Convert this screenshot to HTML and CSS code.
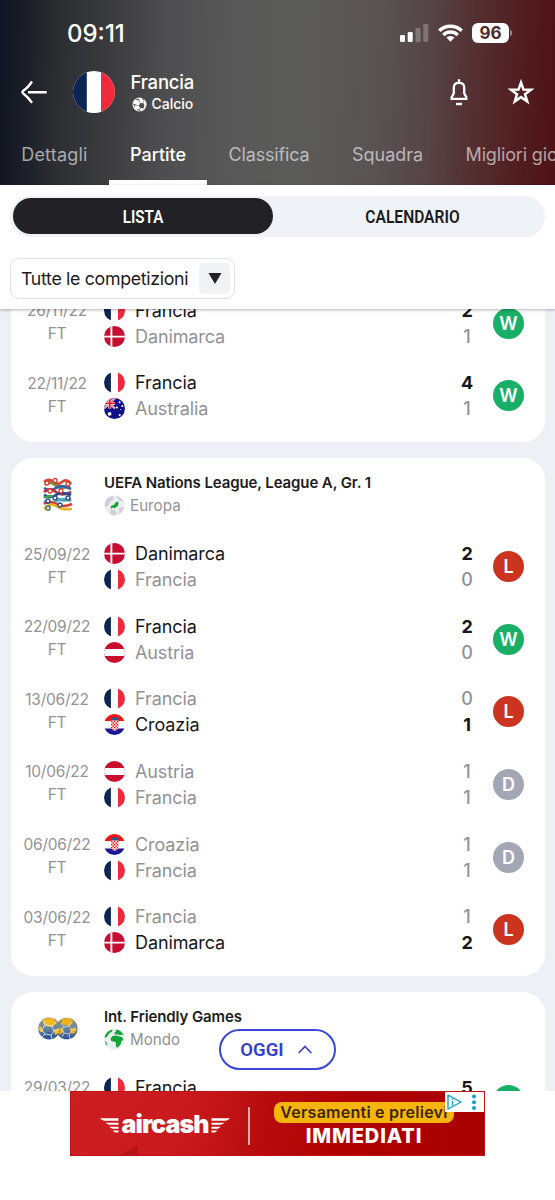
FILE: index.html
```html
<!DOCTYPE html>
<html lang="it">
<head>
<meta charset="utf-8">
<title>Francia – Partite</title>
<link rel="stylesheet" href="styles.css">
</head>
<body>
<svg class="defs" width="0" height="0" aria-hidden="true">
  <symbol id="fr" viewBox="0 0 21 21"><rect width="21" height="21" fill="#fff"/><rect width="6.9" height="21" fill="#0b2554"/><rect x="14" width="7" height="21" fill="#ef2b3b"/></symbol>
  <symbol id="dk" viewBox="0 0 21 21"><rect width="21" height="21" fill="#c60f30"/><path d="M7.4 0v21M0 10.6h21" stroke="#fff" stroke-width="1.9"/></symbol>
  <symbol id="at" viewBox="0 0 21 21"><rect width="21" height="21" fill="#c8102e"/><rect y="7" width="21" height="7" fill="#fff"/></symbol>
  <symbol id="hr" viewBox="0 0 21 21"><rect width="21" height="21" fill="#fff"/><rect width="21" height="7" fill="#f5160c"/><rect y="14.5" width="21" height="7" fill="#171796"/><path d="M6.500 2.700l1.700 1 1.600-1 .9.6.9-.6 1.600 1 1.700-1-.8 4.300H7.300z" fill="#35558f"/><path d="M7 6.500h7.400v6q0 3.600-3.700 4.200Q7 16 7 12.500z" fill="#fff"/><path d="M7 7.500h7.400M7 10.500h7.400M7 13.500h7M8.500 15.500h4.500" stroke="#f5160c" stroke-width="1.500" stroke-dasharray="1.500 1.450"/><path d="M8.500 9h6M8.500 12h6" stroke="#f5160c" stroke-width="1.500" stroke-dasharray="1.500 1.450"/></symbol>
  <symbol id="au" viewBox="0 0 21 21"><rect width="21" height="21" fill="#10108c"/><path d="M0 0l11 10.500M11 0L0 10.500" stroke="#fff" stroke-width="2"/><path d="M0 0l11 10.500M11 0L0 10.500" stroke="#f01828" stroke-width=".8"/><path d="M5.800 0v10.500M0 5.400h11" stroke="#fff" stroke-width="3"/><path d="M5.800 0v10.500M0 5.400h11" stroke="#f01828" stroke-width="1.800"/><g fill="#fff"><circle cx="5.600" cy="15.800" r="1.900"/><circle cx="15.600" cy="4.300" r="1"/><circle cx="12.900" cy="9.500" r="1"/><circle cx="18.300" cy="8" r="1"/><circle cx="16.700" cy="11.500" r=".6"/><circle cx="15.700" cy="17" r="1.100"/></g></symbol>
</svg>

<header class="top">
  <div class="status">
    <span class="clock">09:11</span>
    <div class="status-icons">
      <svg width="29" height="19" viewBox="0 0 29 19"><g fill="#fff"><rect x="0" y="11" width="5" height="7" rx="1.300"/><rect x="7.700" y="8" width="5" height="10" rx="1.300"/><g opacity=".25"><rect x="15.500" y="4" width="5" height="14" rx="1.300"/><rect x="23.300" y="0" width="5" height="18" rx="1.300"/></g></g></svg>
      <svg width="25" height="18" viewBox="0 0 25 18" fill="none" stroke="#fff" stroke-width="3.500"><path d="M1.300 6.700a16 16 0 0 1 22.400 0M5.300 10.900a10.300 10.300 0 0 1 14.400 0"/><path d="M12.500 17.700l-4.100-4.100a5.900 5.900 0 0 1 8.200 0z" fill="#fff" stroke="none"/></svg>
      <span class="battery"><span class="level">96</span><span class="nub"></span></span>
    </div>
  </div>
  <div class="team">
    <svg class="back" width="28" height="26" viewBox="0 0 28 26" fill="none" stroke="#fff" stroke-width="2.400"><path d="M9 13.200h18.700M13 2.500C10 7 8.500 9.200 4.500 11.500Q2.300 13 4.500 14.700C8.500 17.500 10 19.500 13 23.700"/></svg>
    <svg class="crest"><use href="#fr"/></svg>
    <div class="team-text">
      <div class="team-name">Francia</div>
      <div class="sport"><svg width="15" height="15" viewBox="0 0 15 15"><circle cx="7.500" cy="7.500" r="7" fill="#fff"/><path d="M8 6.300l3.200-.3 1.300 2.500-1.200 2.700-3 .1L6.800 9z" fill="#4b4b4b"/><path d="M3.500 2.800l2.500-.6 1.500 1.500M1 7l2 .6-.8 2.500M5 12.500l2.500.4.8 1.600M10.500 1.200l1.500 2" fill="none" stroke="#666" stroke-width="1.100"/><path d="M8 6.300L7 3.700M6.800 9L3 7.600M8.300 11.300L7.500 13M11.200 6l1-2.500M11.300 11.200l1 1" stroke="#777" stroke-width=".7"/></svg><span>Calcio</span></div>
    </div>
    <svg class="bell" width="20" height="28" viewBox="0 0 20 28" fill="none" stroke="#fff" stroke-width="2.300"><path d="M10 1.200v3.500"/><path d="M4.800 14.500V9.500Q4.800 4.900 10 4.900t5.200 4.600v5q0 1.200.8 2.400l1.300 2.100v1.800H2.700V19L4 16.900q.8-1.200.8-2.400z"/><path d="M7 26h6" stroke-width="2.400"/></svg>
    <svg class="star" width="26" height="26" viewBox="0 0 26 26" fill="none" stroke="#fff" stroke-width="2.500"><path d="M13 3.600l2.500 7 7.500.1-6 4.500 2.200 7.200-6.200-4.300-6.200 4.300L9 15.200l-6-4.500 7.500-.1z"/></svg>
  </div>
  <nav class="tabs">
    <a class="tab tab-first">Dettagli</a>
    <a class="tab tab-on">Partite</a>
    <a class="tab tab-tight">Classifica</a>
    <a class="tab">Squadra</a>
    <a class="tab tab-tight">Migliori giocatori</a>
  </nav>
</header>

<section class="controls">
  <div class="segment"><div class="seg seg-on"><span>LISTA</span></div><div class="seg seg-off"><span>CALENDARIO</span></div></div>
  <div class="picker"><span>Tutte le competizioni</span><div class="picker-btn"><svg width="14" height="11" viewBox="0 0 14 11"><path d="M.5 0h13L7 11z" fill="#222226"/></svg></div></div>
</section>

<main class="feed">
  <div class="feed-inner">
    <article class="card card-cut">
      <div class="match"><div class="when"><span>26/11/22</span><span>FT</span></div>
        <div class="sides"><div class="side win"><svg class="flag"><use href="#fr"/></svg><span>Francia</span><b>2</b></div><div class="side"><svg class="flag"><use href="#dk"/></svg><span>Danimarca</span><b>1</b></div></div><i class="res w">W</i></div>
      <div class="match"><div class="when"><span>22/11/22</span><span>FT</span></div>
        <div class="sides"><div class="side win"><svg class="flag"><use href="#fr"/></svg><span>Francia</span><b>4</b></div><div class="side"><svg class="flag"><use href="#au"/></svg><span>Australia</span><b>1</b></div></div><i class="res w">W</i></div>
    </article>

    <article class="card">
      <div class="comp">
        <div class="comp-logo"><svg width="32" height="35" viewBox="0 0 32 35" fill="none"><g stroke-width="2.700"><path d="M2 5q5-4 9 0t9 0 9 2" stroke="#d6452f"/><path d="M3 8q5-5 10 0t15 1" stroke="#7b8d42"/><path d="M2 11q6 4 12 0t15 1" stroke="#3163aa"/><path d="M2 15q6-5 12 0t15 0" stroke="#b92d49"/><path d="M2 18q7 4 12 0t15 0" stroke="#274c96"/><path d="M2 21q6-4 12 0t15 1" stroke="#43a054"/><path d="M2 24q7 4 13 0t14 0" stroke="#56a5d4"/><path d="M2 27q5-4 12 0t16 0" stroke="#d43c2f"/><path d="M2 32q7-7 12-3t16 3" stroke="#e6b325"/></g><g stroke="#d43c2f" stroke-width="1.300" fill="#fff"><circle cx="5" cy="6" r="2"/><circle cx="13" cy="3.500" r="2"/><circle cx="26" cy="7" r="2"/><circle cx="8" cy="14" r="2"/><circle cx="19" cy="14" r="2"/></g><g stroke="#2a4b8b" stroke-width="1.300" fill="#eee"><circle cx="13" cy="21" r="2"/><circle cx="26" cy="21" r="2"/><circle cx="6" cy="24" r="2"/><circle cx="18" cy="28" r="2"/></g><circle cx="6" cy="31" r="2.200" stroke="#3c7447" stroke-width="1.300" fill="#ece"/></svg></div>
        <div class="comp-text"><div class="comp-name">UEFA Nations League, League A, Gr. 1</div><div class="comp-area"><svg width="21" height="21" viewBox="0 0 21 21"><circle cx="10.500" cy="10.500" r="10.200" fill="#eceef2"/><path d="M1 7q3-6 8-6l1 3-4 3-2 4-3 1zM12 1q5 1 7.500 5.500L16 6l-2-2zM6 14l5 1 2 4-3 1.700-3-1zM15 13l5-1q-1 5-5 7z" fill="#cdd1d7"/><path d="M6.500 13l1-2.500 2.500-.5 1.500-2.500 3-1-.3 3-.2 1.500-2 1-1.500 1.500-1.500-1-1.500 1z" fill="#12a332"/></svg><span>Europa</span></div></div>
      </div>
      <div class="match"><div class="when"><span>25/09/22</span><span>FT</span></div>
        <div class="sides"><div class="side win"><svg class="flag"><use href="#dk"/></svg><span>Danimarca</span><b>2</b></div><div class="side"><svg class="flag"><use href="#fr"/></svg><span>Francia</span><b>0</b></div></div><i class="res l">L</i></div>
      <div class="match"><div class="when"><span>22/09/22</span><span>FT</span></div>
        <div class="sides"><div class="side win"><svg class="flag"><use href="#fr"/></svg><span>Francia</span><b>2</b></div><div class="side"><svg class="flag"><use href="#at"/></svg><span>Austria</span><b>0</b></div></div><i class="res w">W</i></div>
      <div class="match"><div class="when"><span>13/06/22</span><span>FT</span></div>
        <div class="sides"><div class="side"><svg class="flag"><use href="#fr"/></svg><span>Francia</span><b>0</b></div><div class="side win"><svg class="flag"><use href="#hr"/></svg><span>Croazia</span><b>1</b></div></div><i class="res l">L</i></div>
      <div class="match"><div class="when"><span>10/06/22</span><span>FT</span></div>
        <div class="sides"><div class="side"><svg class="flag"><use href="#at"/></svg><span>Austria</span><b>1</b></div><div class="side"><svg class="flag"><use href="#fr"/></svg><span>Francia</span><b>1</b></div></div><i class="res d">D</i></div>
      <div class="match"><div class="when"><span>06/06/22</span><span>FT</span></div>
        <div class="sides"><div class="side"><svg class="flag"><use href="#hr"/></svg><span>Croazia</span><b>1</b></div><div class="side"><svg class="flag"><use href="#fr"/></svg><span>Francia</span><b>1</b></div></div><i class="res d">D</i></div>
      <div class="match"><div class="when"><span>03/06/22</span><span>FT</span></div>
        <div class="sides"><div class="side"><svg class="flag"><use href="#fr"/></svg><span>Francia</span><b>1</b></div><div class="side win"><svg class="flag"><use href="#dk"/></svg><span>Danimarca</span><b>2</b></div></div><i class="res l">L</i></div>
    </article>

    <article class="card">
      <div class="comp">
        <div class="comp-logo"><svg width="40" height="23" viewBox="0 0 40 23"><defs><linearGradient id="ball" x1="0" y1="0" x2="0" y2="1"><stop offset="0" stop-color="#a9975a"/><stop offset=".45" stop-color="#6f86a0"/><stop offset="1" stop-color="#28528f"/></linearGradient></defs><circle cx="28.800" cy="11.500" r="10.800" fill="url(#ball)"/><path d="M24 2l8-1 3 4-4 4-7-2zM32 12l6-2-1 6-4 1zM19 12l4-2 3 4-4 4z" fill="#eeb31d"/><path d="M26 10l5-1 3 4-3 4-5-1-2-3zM26 10l-3-4M31 9l3-4M34 13l5 0M31 17l1 5M26 16l-2 4" fill="none" stroke="#d8e0e4" stroke-width=".8"/><circle cx="11.200" cy="11.500" r="11" fill="url(#ball)"/><path d="M6 2l9-1 4 5-5 4-7-1-2-4zM1 9l3 1 1 5-3 0zM16 13l5-2 0 5-4 2z" fill="#f1bb20"/><path d="M8 16l6-1 2 5-5 2-4-2z" fill="#31599a"/><path d="M7 8l7 1 2 5-3 4-6-1-3-4zM7 8L5 3M14 9l4-4M16 14l6-2M13 18l1 4M7 17l-3 3M4 13l-4-1" fill="none" stroke="#dce5e8" stroke-width=".9"/></svg></div>
        <div class="comp-text"><div class="comp-name">Int. Friendly Games</div><div class="comp-area"><svg width="21" height="21" viewBox="0 0 21 21"><circle cx="10.500" cy="10.500" r="10.200" fill="#e9ecf0"/><path d="M1 6.500Q3.500 1.500 8.500.5L8 2.500 5 4.500 4 6.500 2.500 8 .6 9zM11.500.4q6 .6 8.500 6.100l-2-1-2 .7-2.500-1-2.500.3-.8-1.500 2-1.500zM6.500 9.500l2-2.500 3.500-.5 3.500 1L18 8l1.500 3-2 1-.7 3-2.800 3.500-2-.5-.3-5L9 12.500l-2-.7zM.8 11.500l1.700 2 .5 3.500q-1.900-2-2.200-5.500z" fill="#12a535"/></svg><span>Mondo</span></div></div>
      </div>
      <div class="match"><div class="when when-cut"><span>29/03/22</span></div>
        <div class="sides sides-cut"><div class="side win"><svg class="flag"><use href="#fr"/></svg><span>Francia</span><b>5</b></div></div><i class="res w"></i></div>
    </article>
  </div>
  <div class="today"><span>OGGI</span><svg width="14" height="9" viewBox="0 0 14 9" fill="none" stroke="#3340cf" stroke-width="1.700"><path d="M.7 8L7 1.500 13.300 8"/></svg></div>
</main>

<footer class="foot">
  <div class="ad">
    <div class="brand">
      <svg width="20" height="16" viewBox="0 0 20 16" fill="#fff"><path d="M0 .3h18.500v2.400H4Q1.500 2.300 0 .3zM5.500 4.700h13v2h-9Q7 6.300 5.500 4.700zM9.500 8.700h9v2h-6Q10.500 10.200 9.500 8.700zM12.500 12.500h6v2h-3.500z"/></svg>
      <span>aircash</span>
      <svg width="20" height="16" viewBox="0 0 20 16" fill="#fff"><path d="M20 .3H1.500v2.400H16Q18.500 2.300 20 .3zM14.500 4.700h-13v2h9Q13 6.300 14.500 4.700zM10.500 8.700h-9v2h6Q9.500 10.200 10.500 8.700zM7.500 12.500h-6v2H5z"/></svg>
    </div>
    <div class="ad-line"></div>
    <div class="ad-copy"><span class="ad-pill">Versamenti e prelievi</span><strong>IMMEDIATI</strong></div>
    <svg class="ad-info" width="39" height="20" viewBox="0 0 39 20"><rect width="39" height="20" fill="#fff"/><path d="M3 3.200L16 10 3 17z" fill="none" stroke="#14a3bd" stroke-width="1.400" stroke-linejoin="round"/><path d="M7.500 9v4.500M7.500 6.500v1.300" stroke="#14a3bd" stroke-width="1.400"/><g fill="#14a3bd"><circle cx="29" cy="4.500" r="2"/><circle cx="29" cy="10.200" r="2"/><circle cx="29" cy="15.900" r="2"/></g></svg>
  </div>
</footer>
</body>
</html>
```
FILE: styles.css
```css
* { box-sizing: border-box; }
body {
  margin: 0;
  width: 555px;
  height: 1200px;
  overflow: hidden;
  background: #fff;
  color: #1c1c20;
  font-family: Inter, "Liberation Sans", sans-serif;
  display: flex;
  flex-direction: column;
}
.defs { position: absolute; }
svg { display: block; flex: none; }

.top {
  height: 185px;
  flex: none;
  overflow: hidden;
  color: #fff;
  background: linear-gradient(92deg, #101522 0%, #191c26 4%, #2c2e32 11%, #3c3c3e 20%, #4e4e50 30%, #585858 42%, #5b5b5a 55%, #595252 68%, #564446 77%, #542f31 85%, #511a1d 95%, #4e1215 100%);
}
.status {
  height: 66px;
  padding: 0 43px 0 67px;
  display: flex;
  justify-content: space-between;
  align-items: center;
}
.clock { font-size: 24px; font-weight: 500; letter-spacing: 0; }
.status-icons { display: flex; align-items: center; gap: 9px; }
.battery { display: flex; align-items: center; gap: 1px; }
.level {
  width: 37px;
  height: 20px;
  border-radius: 6px;
  background: #fff;
  color: #4c2c2f;
  font: 700 17px/20px Inter, sans-serif;
  text-align: center;
}
.nub { width: 2px; height: 6px; border-radius: 0 2px 2px 0; background: #9a8384; }

.team { height: 52px; display: flex; align-items: center; padding: 0 21px 0 19px; }
.crest { width: 42px; height: 42px; border-radius: 50%; margin-left: 25.5px; }
.team-text { margin-left: 16px; flex: 1; }
.team-name { font-size: 18.5px; line-height: 24px; font-weight: 500; letter-spacing: -0.2px; }
.sport { display: flex; align-items: center; gap: 5px; padding-left: 1px; font-size: 14px; line-height: 20px; font-weight: 500; }
.bell { margin-right: 39px; }

.tabs { height: 67px; display: flex; }
.tab {
  flex: none;
  padding: 25px 21.2px 0;
  font-size: 18px;
  line-height: 24px;
  color: rgba(255, 255, 255, .6);
  white-space: nowrap;
}
.tab-first { letter-spacing: 0.2px; }
.tab-tight { letter-spacing: -0.15px; }
.tab-on { color: #fff; font-weight: 500; border-bottom: 5px solid #fff; }

.controls {
  height: 124px;
  flex: none;
  padding: 11px 10px 0;
  background: #fff;
  position: relative;
  z-index: 2;
  box-shadow: 0 1px 3px rgba(0, 0, 0, .3);
}
.segment { height: 41px; border-radius: 21px; background: #eff2f6; display: flex; padding: 2px 2px 3px 3px; }
.seg { flex: 1; display: flex; align-items: center; justify-content: center; padding-top: 1px; font: 600 18px/20px Roboto, sans-serif; }
.seg span { transform: scaleX(.84); }
.seg-on { flex: 0 0 260px; background: #222226; color: #fff; border-radius: 18px; }
.seg-off { padding-left: 8px; }
.seg-off span { transform: scaleX(.865); }
.picker {
  width: 225px;
  height: 41px;
  margin-top: 21px;
  border: 1.5px solid #dfe1e5;
  border-radius: 9px;
  display: flex;
  align-items: center;
  justify-content: space-between;
  padding: 0 4px 0 10px;
  font-size: 17.8px;
  letter-spacing: -0.33px;
  white-space: nowrap;
}
.picker-btn { width: 31px; height: 31px; border-radius: 5px; background: #f0f3f6; display: grid; place-items: center; }

.feed { height: 782px; flex: none; overflow: hidden; background: #edf0f5; position: relative; }
.feed-inner { margin-top: -22px; padding: 0 10px 0 11px; display: flex; flex-direction: column; gap: 16px; }
.card { background: #fff; border-radius: 22px; padding-bottom: 10px; }
.card-cut { border-radius: 0 0 22px 22px; }
.comp { height: 72.3px; display: flex; }
.comp-logo { width: 93px; height: 72px; display: grid; place-items: center; }
.comp-text { padding-top: 14px; }
.comp-name { font-size: 15px; line-height: 22px; font-weight: 600; letter-spacing: -0.11px; white-space: nowrap; }
.comp-area { display: flex; align-items: center; gap: 5px; margin-top: 1px; font-size: 15.2px; color: #929297; }

.match { height: 72.6px; display: flex; align-items: center; padding-right: 21px; }
.when { width: 92px; margin-right: 1px; display: flex; flex-direction: column; align-items: center; font-size: 15.5px; line-height: 23px; letter-spacing: -0.25px; color: #929297; padding-bottom: 2.4px; }
.when-cut { height: 48.4px; }
.sides { flex: 1; }
.sides-cut { height: 52px; }
.side { height: 26px; display: flex; align-items: center; font-size: 18px; letter-spacing: -0.1px; color: #929297; }
.side span { flex: 1; margin-left: 10px; }
.side b { width: 14px; text-align: center; font-weight: 500; }
.flag { width: 21px; height: 21px; border-radius: 50%; }
.win { color: #17171b; }
.win b { font-weight: 700; }
.res {
  width: 31px;
  height: 31px;
  border-radius: 50%;
  margin-left: 19px;
  color: #fff;
  font: 600 18px/32px Inter, sans-serif;
  text-align: center;
}
.w { background: #19af67; }
.l { background: #cb3520; }
.d { background: #a3a7b3; }

.today {
  position: absolute;
  left: 219px;
  top: 720px;
  width: 117px;
  height: 41px;
  border: 2px solid #3a46d8;
  border-radius: 21px;
  background: #fff;
  color: #3340cf;
  display: flex;
  align-items: center;
  justify-content: center;
  gap: 14px;
  padding-right: 3px;
  font: 600 18.5px/20px Roboto, sans-serif;
}

.foot { flex: 1; display: flex; justify-content: center; align-items: flex-start; background: #fff; }
.ad {
  width: 415px;
  height: 65px;
  position: relative;
  display: flex;
  align-items: center;
  padding-left: 29px;
  color: #fff;
  border: 1px solid #c01217;
  background:
    linear-gradient(150deg, transparent 0 50%, rgba(120, 0, 0, .25) 50% 100%) 45px 53px / 22px 12px no-repeat,
    linear-gradient(100deg, #cd1e22 0%, #c8191d 30%, #b60b0d 48%, #b00102 65%, #a90203 100%);
}
.brand { display: flex; align-items: center; font-size: 25px; font-weight: 900; letter-spacing: -0.9px; }
.brand span { width: 90px; text-align: center; }
.brand svg { margin-top: 4px; }
.ad-line { width: 2px; height: 38px; background: rgba(255, 255, 255, .65); margin-left: 18px; margin-top: 4px; }
.ad-copy { margin-left: 24px; margin-top: 3px; display: flex; flex-direction: column; align-items: center; }
.ad-pill { width: 180px; height: 21px; border-radius: 8px; background: #f7b50b; color: #3d2604; font-size: 16px; line-height: 20px; font-weight: 600; letter-spacing: 0.25px; text-align: center; white-space: nowrap; }
.ad-copy strong { font-size: 20px; line-height: 26px; font-weight: 800; letter-spacing: 0.9px; }
.ad-info { position: absolute; right: 0; top: 0; }
```
